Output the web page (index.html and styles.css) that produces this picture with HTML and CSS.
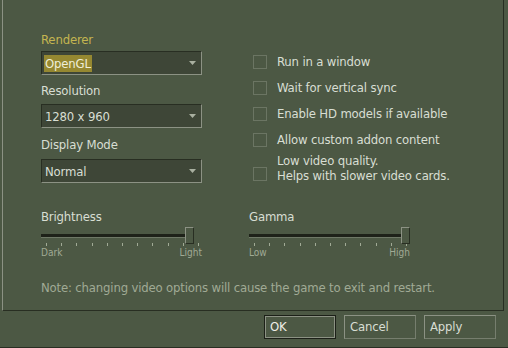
FILE: index.html
```html
<!DOCTYPE html>
<html lang="en">
<head>
  <meta charset="UTF-8">
  <title>Video Options</title>
  <link rel="stylesheet" href="styles.css">
</head>
<body>
  <div class="window">

    <!-- Video page of the options sheet -->
    <div class="sheet">
      <div class="options">
        <div class="col-left">
          <div class="field-label active">Renderer</div>
          <div class="combo combo-first">
            <span class="combo-text selected">OpenGL</span>
            <svg class="combo-arrow" width="7" height="4" viewBox="0 0 7 4"><path d="M0 0H7L3.5 4Z"/></svg>
          </div>

          <div class="field-label">Resolution</div>
          <div class="combo combo-second">
            <span class="combo-text">1280 x 960</span>
            <svg class="combo-arrow" width="7" height="4" viewBox="0 0 7 4"><path d="M0 0H7L3.5 4Z"/></svg>
          </div>

          <div class="field-label label-mode">Display Mode</div>
          <div class="combo combo-third">
            <span class="combo-text">Normal</span>
            <svg class="combo-arrow" width="7" height="4" viewBox="0 0 7 4"><path d="M0 0H7L3.5 4Z"/></svg>
          </div>
        </div>

        <div class="col-right">
          <div class="check-row"><span class="check-box"></span><span>Run in a window</span></div>
          <div class="check-row"><span class="check-box"></span><span>Wait for vertical sync</span></div>
          <div class="check-row"><span class="check-box"></span><span>Enable HD models if available</span></div>
          <div class="check-row tight"><span class="check-box"></span><span>Allow custom addon content</span></div>
          <div class="check-row multi">
            <span class="check-box"></span>
            <span class="check-text">Low video quality.<br>Helps with slower video cards.</span>
          </div>
        </div>
      </div>

      <div class="sliders">
        <div class="slider-group">
          <div class="slider-label">Brightness</div>
          <div class="slider">
            <div class="slider-track"></div>
            <div class="slider-thumb"></div>
            <div class="ticks">
              <i></i><i></i><i></i><i></i><i></i><i></i><i></i><i></i><i></i><i></i><i></i>
            </div>
          </div>
          <div class="tick-labels"><span>Dark</span><span>Light</span></div>
        </div>

        <div class="slider-group">
          <div class="slider-label">Gamma</div>
          <div class="slider slider-max">
            <div class="slider-track"></div>
            <div class="slider-thumb"></div>
            <div class="ticks">
              <i></i><i></i><i></i><i></i><i></i><i></i><i></i><i></i><i></i><i></i><i></i>
            </div>
          </div>
          <div class="tick-labels"><span>Low</span><span>High</span></div>
        </div>
      </div>

      <p class="note">Note: changing video options will cause the game to exit and restart.</p>
    </div>

    <!-- Dialog buttons -->
    <div class="buttons">
      <button class="btn btn-default">OK</button>
      <button class="btn">Cancel</button>
      <button class="btn">Apply</button>
    </div>
  </div>
</body>
</html>
```

FILE: styles.css
```css
:root {
  --bg: #4c5844;
  --bg-dark: #3e4637;
  --border-bright: #8c9284;
  --border-dark: #282e22;
  --text: #d8ded3;
  --text-dim: #a0aa95;
  --text-yellow: #c4b550;
  --select: #958831;
}

html, body {
  margin: 0;
  padding: 0;
  background-color: var(--bg);
  color: var(--text);
  font-family: "DejaVu Sans Condensed", "DejaVu Sans", sans-serif;
  font-stretch: condensed;
  font-size: 13px;
  letter-spacing: -0.17px;
}

.window {
  width: 508px;
  height: 348px;
  box-sizing: border-box;
  border-bottom: 1px solid var(--border-dark);
  overflow: hidden;
}

.sheet {
  margin-left: 2px;
  width: 502px;
  height: 311px;
  box-sizing: border-box;
  border-left: 1px solid var(--border-bright);
  border-right: 1px solid var(--border-dark);
  border-bottom: 1px solid var(--border-dark);
  padding: 32px 0 0 38px;
}

.options {
  display: grid;
  grid-template-columns: 161px 1fr;
  column-gap: 47px;
  height: 152px;
}

.col-left {
  display: flex;
  flex-direction: column;
}

.field-label {
  height: 16px;
  line-height: 16px;
  margin-top: 8px;
}

.field-label:first-child {
  margin-top: 0;
}

.field-label.active {
  color: var(--text-yellow);
}

.label-mode {
  margin-top: 9px;
}

.combo {
  height: 24px;
  box-sizing: border-box;
  background-color: var(--bg-dark);
  border-top: 1px solid var(--border-dark);
  border-left: 1px solid var(--border-dark);
  border-bottom: 1px solid var(--border-bright);
  border-right: 1px solid var(--border-bright);
  display: flex;
  align-items: center;
  justify-content: space-between;
  padding: 0 5px 0 2px;
}

.combo-first { margin-top: 3px; }
.combo-second { margin-top: 5px; }
.combo-third { margin-top: 6px; }

.combo-text {
  line-height: 17px;
  padding: 0 1px;
}

.combo-text.selected {
  background-color: var(--select);
  color: #eeeed8;
}

.combo-arrow {
  fill: #a9b0a0;
}

.col-right {
  padding: 22px 0 0 4px;
}

.check-row {
  display: flex;
  align-items: center;
  gap: 10px;
  line-height: 16px;
  margin-bottom: 10px;
}

.check-row.tight {
  margin-bottom: 5px;
}

.check-row.multi {
  align-items: flex-end;
  line-height: 15px;
}

.check-row.multi .check-box {
  margin-bottom: 2px;
}

.check-box {
  width: 14px;
  height: 14px;
  box-sizing: border-box;
  border: 1px solid #6b7563;
  flex-shrink: 0;
}

.sliders {
  display: grid;
  grid-template-columns: 161px 161px;
  column-gap: 47px;
  margin-top: 25px;
}

.slider-label {
  height: 16px;
  line-height: 16px;
}

.slider {
  position: relative;
  padding-top: 9px;
}

.slider-track {
  height: 3px;
  background-color: #1e2219;
  border-bottom: 1px solid #6e7866;
  margin-right: 12px;
}

.slider-thumb {
  position: absolute;
  top: 2px;
  right: 8px;
  width: 9px;
  height: 17px;
  box-sizing: border-box;
  background-color: var(--bg);
  border-top: 1px solid var(--border-bright);
  border-left: 1px solid var(--border-bright);
  border-right: 1px solid var(--border-dark);
  border-bottom: 1px solid var(--border-dark);
}

.slider-max .slider-thumb {
  right: 0;
}

.slider-max .slider-track {
  margin-right: 4px;
}

.ticks {
  display: flex;
  justify-content: space-between;
  margin-top: 5px;
  padding: 0 3px 0 5px;
  height: 3px;
}

.ticks i {
  width: 1px;
  height: 3px;
  background-color: #a0aa95;
}

.tick-labels {
  display: flex;
  justify-content: space-between;
  margin-top: 1px;
  font-size: 10px;
  line-height: 12px;
  letter-spacing: 0;
  color: var(--text-dim);
}

.note {
  margin: 21px 0 0;
  line-height: 16px;
  color: var(--text-dim);
}

.buttons {
  display: flex;
  justify-content: flex-end;
  gap: 8px;
  padding: 4px 12px 0 0;
}

.btn {
  width: 72px;
  height: 24px;
  box-sizing: border-box;
  margin: 0;
  padding: 0 0 0 5px;
  background-color: var(--bg);
  border: 1px solid var(--border-bright);
  border-right-color: #767e6e;
  border-bottom-color: #767e6e;
  color: var(--text);
  font-family: inherit;
  font-stretch: condensed;
  font-size: 13px;
  letter-spacing: -0.17px;
  line-height: 22px;
  text-align: left;
  cursor: pointer;
}

.btn-default {
  border: 1px solid #1c2018;
  box-shadow: inset 0 0 0 1px var(--border-bright);
  color: #eeeee6;
}
```
